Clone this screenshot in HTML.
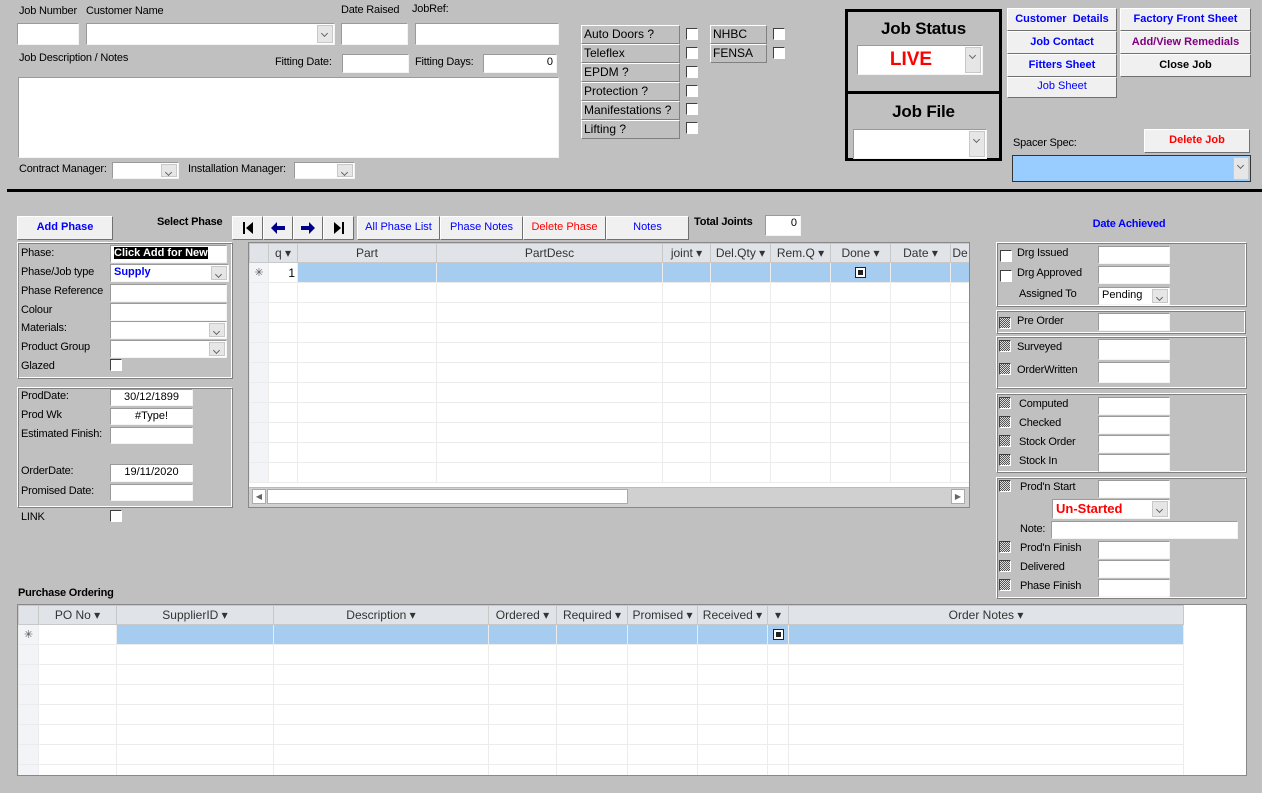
<!DOCTYPE html>
<html><head><meta charset="utf-8"><style>
*{box-sizing:border-box;margin:0;padding:0}
body{width:1262px;height:793px;background:#c0c0c0;font-family:"Liberation Sans",sans-serif;font-size:11px;color:#000;position:relative;overflow:hidden}
.a{position:absolute}
.l{position:absolute;font-size:11px;white-space:nowrap;letter-spacing:-0.2px}
.i{position:absolute;background:#fff;border:1px solid;border-color:#9a9a9a #f4f4f4 #f4f4f4 #9a9a9a;font-size:11px;padding:1px 3px;white-space:nowrap;overflow:hidden}
.dd{position:absolute;right:1px;top:1px;bottom:1px;width:16px;background:#e6e6e6;border:1px solid #c8c8c8}
.dd:after{content:"";position:absolute;left:4px;top:5px;width:4px;height:4px;border-right:1px solid #666;border-bottom:1px solid #666;transform:rotate(45deg)}
.b{position:absolute;background:#f0f0f0;border:1px solid;border-color:#fff #707070 #707070 #fff;text-align:center;font-size:11px;font-weight:bold;color:#00f;white-space:nowrap;overflow:hidden}
.b svg{position:absolute;left:50%;top:50%;transform:translate(-50%,-50%)}
.cb{position:absolute;width:12px;height:12px;background:#fff;border:1px solid;border-color:#404040 #fff #fff #404040}
.ck{position:absolute;width:12px;height:12px;border:1px solid;border-color:#404040 #fff #fff #404040;background:repeating-conic-gradient(#555 0 25%,#ddd 0 50%) 0 0/2px 2px}
.lb{position:absolute;border:1px solid;border-color:#fff #808080 #808080 #fff;font-size:12px;padding:1px 2px;white-space:nowrap}
.pn{position:absolute;border:1px solid;border-color:#fff #808080 #808080 #fff;box-shadow:inset 1px 1px 0 #808080,inset -1px -1px 0 #fff}
table{border-collapse:collapse;table-layout:fixed;position:absolute;background:#fff}
td{border:1px solid #ececec;height:20px;padding:0 2px;overflow:hidden;white-space:nowrap}
th{background:#e0e3e8;font-weight:normal;font-size:12px;color:#333;border:1px solid #c8c8c8;height:19px;overflow:hidden;white-space:nowrap;text-align:center}
tr.n td{background:#a6cdf0}
td.s{background:#f2f4f8!important;text-align:center;color:#555}
.sq{display:inline-block;width:11px;height:11px;border:1px solid #222;background:#fff;position:relative;vertical-align:middle}
.sq:after{content:"";position:absolute;left:2px;top:2px;width:5px;height:5px;background:#222}
</style></head><body>

<div class="l" style="left:19px;top:5px">Job Number</div>
<div class="l" style="left:86px;top:5px">Customer Name</div>
<div class="l" style="left:341px;top:4px">Date Raised</div>
<div class="l" style="left:412px;top:3px">JobRef:</div>
<div class="i" style="left:17px;top:23px;width:62px;height:22px"></div>
<div class="i" style="left:86px;top:23px;width:249px;height:22px"><div class="dd"></div></div>
<div class="i" style="left:341px;top:23px;width:67px;height:22px"></div>
<div class="i" style="left:415px;top:23px;width:144px;height:22px"></div>
<div class="l" style="left:19px;top:52px">Job Description / Notes</div>
<div class="l" style="left:275px;top:56px">Fitting Date:</div>
<div class="i" style="left:342px;top:54px;width:67px;height:19px"></div>
<div class="l" style="left:415px;top:56px">Fitting Days:</div>
<div class="i" style="left:483px;top:54px;width:74px;height:19px;text-align:right">0</div>
<div class="i" style="left:18px;top:77px;width:541px;height:81px"></div>
<div class="l" style="left:19px;top:163px">Contract Manager:</div>
<div class="i" style="left:112px;top:162px;width:67px;height:17px"><div class="dd"></div></div>
<div class="l" style="left:188px;top:163px">Installation Manager:</div>
<div class="i" style="left:294px;top:162px;width:61px;height:17px"><div class="dd"></div></div>

<div class="lb" style="left:581px;top:25px;width:99px;height:19px">Auto Doors ?</div>
<div class="lb" style="left:581px;top:44px;width:99px;height:19px">Teleflex</div>
<div class="lb" style="left:581px;top:63px;width:99px;height:19px">EPDM ?</div>
<div class="lb" style="left:581px;top:82px;width:99px;height:19px">Protection ?</div>
<div class="lb" style="left:581px;top:101px;width:99px;height:19px">Manifestations ?</div>
<div class="lb" style="left:581px;top:120px;width:99px;height:19px">Lifting ?</div>
<div class="cb" style="left:686px;top:28px"></div><div class="cb" style="left:686px;top:47px"></div>
<div class="cb" style="left:686px;top:66px"></div><div class="cb" style="left:686px;top:85px"></div>
<div class="cb" style="left:686px;top:103px"></div><div class="cb" style="left:686px;top:122px"></div>
<div class="lb" style="left:710px;top:25px;width:57px;height:19px">NHBC</div>
<div class="lb" style="left:710px;top:44px;width:57px;height:19px">FENSA</div>
<div class="cb" style="left:773px;top:28px"></div><div class="cb" style="left:773px;top:47px"></div>

<div class="a" style="left:845px;top:9px;width:157px;height:85px;border:3px solid #000"></div>
<div class="a" style="left:845px;top:91px;width:157px;height:70px;border:3px solid #000"></div>
<div class="l" style="left:845px;top:19px;width:157px;text-align:center;font-size:17px;font-weight:bold">Job Status</div>
<div class="i" style="left:857px;top:45px;width:126px;height:30px;padding:0"><div style="position:absolute;left:0;right:18px;top:3px;text-align:center;color:#f00;font-weight:bold;font-size:19px">LIVE</div><div class="dd"></div></div>
<div class="l" style="left:845px;top:102px;width:157px;text-align:center;font-size:17px;font-weight:bold">Job File</div>
<div class="i" style="left:853px;top:129px;width:134px;height:30px"><div class="dd"></div></div>

<div class="b" style="left:1007px;top:8px;width:110px;height:23px;line-height:20px">Customer&nbsp; Details</div>
<div class="b" style="left:1007px;top:31px;width:110px;height:23px;line-height:20px">Job Contact</div>
<div class="b" style="left:1007px;top:54px;width:110px;height:23px;line-height:20px">Fitters Sheet</div>
<div class="b" style="left:1007px;top:77px;width:110px;height:21px;line-height:17px;font-weight:normal">Job Sheet</div>
<div class="b" style="left:1120px;top:8px;width:131px;height:23px;line-height:20px">Factory Front Sheet</div>
<div class="b" style="left:1120px;top:31px;width:131px;height:23px;line-height:20px;color:#800080">Add/View Remedials</div>
<div class="b" style="left:1120px;top:54px;width:131px;height:23px;line-height:20px;color:#000">Close Job</div>
<div class="b" style="left:1144px;top:129px;width:106px;height:24px;line-height:21px;color:#f00">Delete Job</div>
<div class="l" style="left:1013px;top:137px">Spacer Spec:</div>
<div class="a" style="left:1012px;top:155px;width:239px;height:27px;background:#99ccff;border:1px solid #333"><div class="dd"></div></div>

<div class="a" style="left:7px;top:189px;width:1255px;height:3px;background:#000"></div>

<div class="b" style="left:17px;top:216px;width:96px;height:24px;line-height:21px">Add Phase</div>
<div class="l" style="left:157px;top:216px;font-weight:bold">Select Phase</div>
<div class="b" style="left:232px;top:216px;width:31px;height:24px"><svg width="12" height="12" viewBox="0 0 12 12"><rect x="1" y="0" width="2" height="12" fill="#000"/><path d="M11 0V12L4 6Z" fill="#000"/></svg></div>
<div class="b" style="left:263px;top:216px;width:30px;height:24px"><svg width="14" height="12" viewBox="0 0 14 12"><path d="M0 6L6 0V4H14V8H6V12Z" fill="#00008b"/></svg></div>
<div class="b" style="left:293px;top:216px;width:30px;height:24px"><svg width="14" height="12" viewBox="0 0 14 12"><path d="M14 6L8 0V4H0V8H8V12Z" fill="#00008b"/></svg></div>
<div class="b" style="left:323px;top:216px;width:31px;height:24px"><svg width="12" height="12" viewBox="0 0 12 12"><path d="M1 0V12L8 6Z" fill="#000"/><rect x="9" y="0" width="2" height="12" fill="#000"/></svg></div>
<div class="b" style="left:357px;top:216px;width:83px;height:24px;line-height:21px;font-weight:normal">All Phase List</div>
<div class="b" style="left:440px;top:216px;width:83px;height:24px;line-height:21px;font-weight:normal">Phase Notes</div>
<div class="b" style="left:523px;top:216px;width:83px;height:24px;line-height:21px;font-weight:normal;color:#f00">Delete Phase</div>
<div class="b" style="left:606px;top:216px;width:83px;height:24px;line-height:21px;font-weight:normal">Notes</div>
<div class="l" style="left:694px;top:216px;font-weight:bold">Total Joints</div>
<div class="i" style="left:765px;top:215px;width:36px;height:21px;text-align:right">0</div>

<div class="pn" style="left:17px;top:242px;width:216px;height:137px"></div>
<div class="l" style="left:21px;top:247px">Phase:</div>
<div class="i" style="left:110px;top:245px;width:117px;height:18px"><span style="background:#000;color:#fff;font-weight:bold">Click Add for New</span></div>
<div class="l" style="left:21px;top:266px">Phase/Job type</div>
<div class="i" style="left:110px;top:264px;width:119px;height:18px;color:#00f;font-weight:bold">Supply<div class="dd"></div></div>
<div class="l" style="left:21px;top:285px">Phase Reference</div>
<div class="i" style="left:110px;top:284px;width:117px;height:18px"></div>
<div class="l" style="left:21px;top:304px">Colour</div>
<div class="i" style="left:110px;top:303px;width:117px;height:18px"></div>
<div class="l" style="left:21px;top:322px">Materials:</div>
<div class="i" style="left:110px;top:321px;width:117px;height:18px"><div class="dd"></div></div>
<div class="l" style="left:21px;top:341px">Product Group</div>
<div class="i" style="left:110px;top:340px;width:117px;height:18px"><div class="dd"></div></div>
<div class="l" style="left:21px;top:360px">Glazed</div>
<div class="cb" style="left:110px;top:359px"></div>

<div class="pn" style="left:17px;top:387px;width:216px;height:121px"></div>
<div class="l" style="left:21px;top:390px">ProdDate:</div>
<div class="i" style="left:110px;top:389px;width:83px;height:17px;text-align:center">30/12/1899</div>
<div class="l" style="left:21px;top:409px">Prod Wk</div>
<div class="i" style="left:110px;top:408px;width:83px;height:17px;text-align:center">#Type!</div>
<div class="l" style="left:21px;top:428px">Estimated Finish:</div>
<div class="i" style="left:110px;top:427px;width:83px;height:17px"></div>
<div class="l" style="left:21px;top:465px">OrderDate:</div>
<div class="i" style="left:110px;top:464px;width:83px;height:18px;text-align:center">19/11/2020</div>
<div class="l" style="left:21px;top:485px">Promised Date:</div>
<div class="i" style="left:110px;top:484px;width:83px;height:17px"></div>
<div class="l" style="left:21px;top:511px">LINK</div>
<div class="cb" style="left:110px;top:510px"></div>

<div class="a" style="left:248px;top:242px;width:722px;height:266px;border:1px solid #888;background:#fff;overflow:hidden">
<table style="left:0;top:0;width:720px">
<colgroup><col style="width:19px"><col style="width:29px"><col style="width:139px"><col style="width:226px"><col style="width:48px"><col style="width:60px"><col style="width:60px"><col style="width:60px"><col style="width:60px"><col style="width:19px"></colgroup>
<tr><th></th><th>q ▾</th><th>Part</th><th>PartDesc</th><th>joint ▾</th><th>Del.Qty ▾</th><th>Rem.Q ▾</th><th>Done ▾</th><th>Date ▾</th><th>De</th></tr>
<tr class="n"><td class="s">✳</td><td style="background:#fff;text-align:right;font-size:12px">1</td><td></td><td></td><td></td><td></td><td></td><td style="text-align:center"><span class="sq"></span></td><td></td><td></td></tr>
<tr><td class="s"></td><td></td><td></td><td></td><td></td><td></td><td></td><td></td><td></td><td></td></tr>
<tr><td class="s"></td><td></td><td></td><td></td><td></td><td></td><td></td><td></td><td></td><td></td></tr>
<tr><td class="s"></td><td></td><td></td><td></td><td></td><td></td><td></td><td></td><td></td><td></td></tr>
<tr><td class="s"></td><td></td><td></td><td></td><td></td><td></td><td></td><td></td><td></td><td></td></tr>
<tr><td class="s"></td><td></td><td></td><td></td><td></td><td></td><td></td><td></td><td></td><td></td></tr>
<tr><td class="s"></td><td></td><td></td><td></td><td></td><td></td><td></td><td></td><td></td><td></td></tr>
<tr><td class="s"></td><td></td><td></td><td></td><td></td><td></td><td></td><td></td><td></td><td></td></tr>
<tr><td class="s"></td><td></td><td></td><td></td><td></td><td></td><td></td><td></td><td></td><td></td></tr>
<tr><td class="s"></td><td></td><td></td><td></td><td></td><td></td><td></td><td></td><td></td><td></td></tr>
<tr><td class="s"></td><td></td><td></td><td></td><td></td><td></td><td></td><td></td><td></td><td></td></tr>
</table>
<div class="a" style="left:0;top:244px;width:720px;height:20px;background:#d0d0d0;border-top:1px solid #bbb"></div>
<div class="a" style="left:3px;top:246px;width:14px;height:15px;background:#fff;border:1px solid #aaa;font-size:8px;color:#666;text-align:center;line-height:13px">◀</div>
<div class="a" style="left:18px;top:246px;width:361px;height:15px;background:#fff;border:1px solid #aaa"></div>
<div class="a" style="left:702px;top:246px;width:14px;height:15px;background:#fff;border:1px solid #aaa;font-size:8px;color:#666;text-align:center;line-height:13px">▶</div>
</div>

<div class="l" style="left:996px;top:218px;width:266px;text-align:center;color:#00f;font-weight:bold">Date Achieved</div>
<div class="pn" style="left:996px;top:242px;width:251px;height:65px"></div>
<div class="cb" style="left:1000px;top:250px"></div><div class="l" style="left:1017px;top:247px">Drg Issued</div>
<div class="i" style="left:1098px;top:246px;width:72px;height:18px"></div>
<div class="cb" style="left:1000px;top:270px"></div><div class="l" style="left:1017px;top:267px">Drg Approved</div>
<div class="i" style="left:1098px;top:266px;width:72px;height:18px"></div>
<div class="l" style="left:1019px;top:288px">Assigned To</div>
<div class="i" style="left:1098px;top:287px;width:72px;height:18px">Pending<div class="dd"></div></div>
<div class="pn" style="left:996px;top:310px;width:250px;height:24px"></div>
<div class="ck" style="left:999px;top:317px"></div><div class="l" style="left:1017px;top:315px">Pre Order</div>
<div class="i" style="left:1098px;top:313px;width:72px;height:18px"></div>
<div class="pn" style="left:996px;top:336px;width:251px;height:53px"></div>
<div class="ck" style="left:999px;top:340px"></div><div class="l" style="left:1017px;top:341px">Surveyed</div>
<div class="i" style="left:1098px;top:339px;width:72px;height:21px"></div>
<div class="ck" style="left:999px;top:363px"></div><div class="l" style="left:1017px;top:364px">OrderWritten</div>
<div class="i" style="left:1098px;top:362px;width:72px;height:21px"></div>
<div class="pn" style="left:996px;top:393px;width:251px;height:80px"></div>
<div class="ck" style="left:999px;top:397px"></div><div class="l" style="left:1019px;top:398px">Computed</div>
<div class="i" style="left:1098px;top:397px;width:72px;height:18px"></div>
<div class="ck" style="left:999px;top:416px"></div><div class="l" style="left:1019px;top:417px">Checked</div>
<div class="i" style="left:1098px;top:416px;width:72px;height:18px"></div>
<div class="ck" style="left:999px;top:435px"></div><div class="l" style="left:1019px;top:436px">Stock Order</div>
<div class="i" style="left:1098px;top:435px;width:72px;height:18px"></div>
<div class="ck" style="left:999px;top:454px"></div><div class="l" style="left:1019px;top:455px">Stock In</div>
<div class="i" style="left:1098px;top:454px;width:72px;height:18px"></div>
<div class="pn" style="left:996px;top:477px;width:251px;height:122px"></div>
<div class="ck" style="left:999px;top:480px"></div><div class="l" style="left:1020px;top:481px">Prod'n Start</div>
<div class="i" style="left:1098px;top:480px;width:72px;height:18px"></div>
<div class="i" style="left:1052px;top:499px;width:118px;height:20px;color:#f00;font-weight:bold;font-size:13px;padding-top:1px">Un-Started<div class="dd"></div></div>
<div class="l" style="left:1020px;top:523px">Note:</div>
<div class="i" style="left:1051px;top:521px;width:187px;height:18px"></div>
<div class="ck" style="left:999px;top:541px"></div><div class="l" style="left:1020px;top:542px">Prod'n Finish</div>
<div class="i" style="left:1098px;top:541px;width:72px;height:18px"></div>
<div class="ck" style="left:999px;top:560px"></div><div class="l" style="left:1020px;top:561px">Delivered</div>
<div class="i" style="left:1098px;top:560px;width:72px;height:18px"></div>
<div class="ck" style="left:999px;top:579px"></div><div class="l" style="left:1020px;top:580px">Phase Finish</div>
<div class="i" style="left:1098px;top:579px;width:72px;height:18px"></div>

<div class="l" style="left:18px;top:587px;font-weight:bold">Purchase Ordering</div>
<div class="a" style="left:17px;top:604px;width:1230px;height:172px;border:1px solid #888;background:#fff;overflow:hidden">
<table style="left:0;top:0;width:1165px">
<colgroup><col style="width:20px"><col style="width:78px"><col style="width:157px"><col style="width:215px"><col style="width:68px"><col style="width:71px"><col style="width:70px"><col style="width:70px"><col style="width:21px"><col style="width:395px"></colgroup>
<tr><th></th><th>PO No ▾</th><th>SupplierID ▾</th><th>Description ▾</th><th>Ordered ▾</th><th>Required ▾</th><th>Promised ▾</th><th>Received ▾</th><th>▾</th><th>Order Notes ▾</th></tr>
<tr class="n"><td class="s">✳</td><td style="background:#fff"></td><td></td><td></td><td></td><td></td><td></td><td></td><td style="text-align:center;padding:0"><span class="sq"></span></td><td></td></tr>
<tr><td class="s"></td><td></td><td></td><td></td><td></td><td></td><td></td><td></td><td></td><td></td></tr>
<tr><td class="s"></td><td></td><td></td><td></td><td></td><td></td><td></td><td></td><td></td><td></td></tr>
<tr><td class="s"></td><td></td><td></td><td></td><td></td><td></td><td></td><td></td><td></td><td></td></tr>
<tr><td class="s"></td><td></td><td></td><td></td><td></td><td></td><td></td><td></td><td></td><td></td></tr>
<tr><td class="s"></td><td></td><td></td><td></td><td></td><td></td><td></td><td></td><td></td><td></td></tr>
<tr><td class="s"></td><td></td><td></td><td></td><td></td><td></td><td></td><td></td><td></td><td></td></tr>
<tr><td class="s"></td><td></td><td></td><td></td><td></td><td></td><td></td><td></td><td></td><td></td></tr>
</table>
</div>
</body></html>
